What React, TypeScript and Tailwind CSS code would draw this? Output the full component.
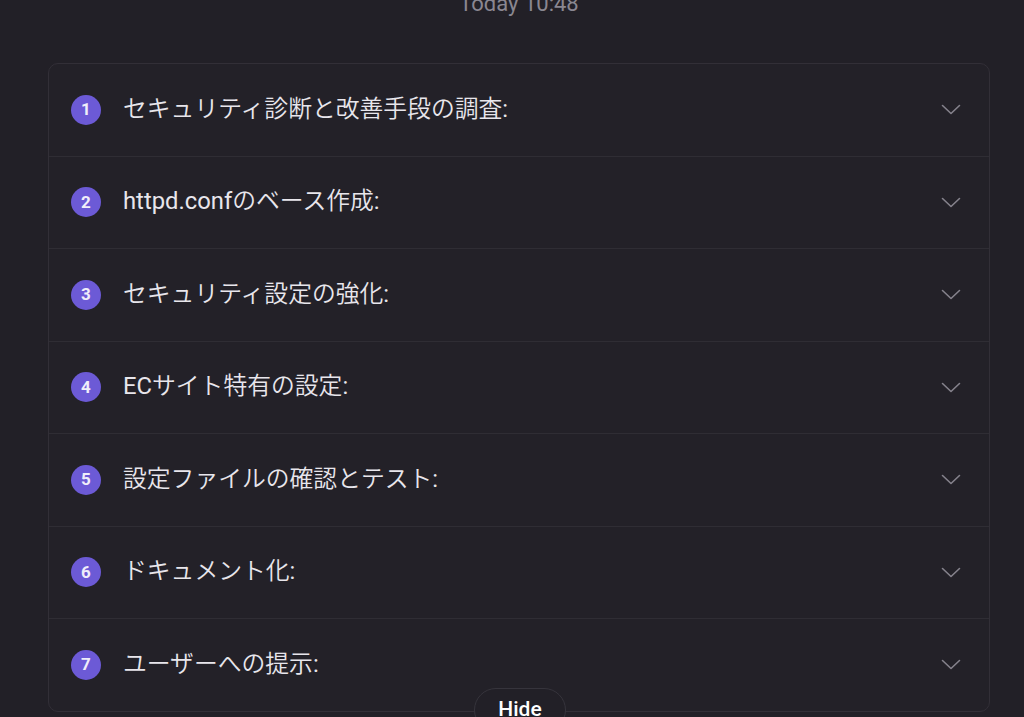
import React from "react";

const items = [
  "セキュリティ診断と改善手段の調査:",
  "httpd.confのベース作成:",
  "セキュリティ設定の強化:",
  "ECサイト特有の設定:",
  "設定ファイルの確認とテスト:",
  "ドキュメント化:",
  "ユーザーへの提示:",
];

function Chevron() {
  return (
    <svg width="20" height="11" viewBox="0 0 20 11" fill="none">
      <path d="M1.5 1.5 L10 9.5 L18.5 1.5" stroke="#85828c" strokeWidth="1.6" strokeLinecap="round" strokeLinejoin="round" />
    </svg>
  );
}

function Label({ text }: { text: string }) {
  const parts = text.split(/([\x00-\x7f]+)/).filter((p) => p.length > 0);
  return (
    <>
      {parts.map((p, i) =>
        /^[\x00-\x7f]+$/.test(p) ? (
          <span key={i} className="font-normal">
            {p}
          </span>
        ) : (
          <span key={i}>{p}</span>
        )
      )}
    </>
  );
}

export default function App() {
  return (
    <div
      className="w-[1024px] h-[717px] overflow-hidden bg-[#222027] text-white"
      style={{ fontFamily: 'Roboto, "Noto Sans CJK JP", sans-serif' }}
    >
      <div className="h-[63px] flex justify-center">
        <div className="ml-[14px] mt-[-10px] text-[22px] leading-[28px] text-[#8a8791]">Today 10:48</div>
      </div>
      <div className="relative ml-[48px] w-[942px]">
        <div className="rounded-[10px] border border-[#322f37] bg-[#232128]">
          {items.map((t, i) => (
            <div
              key={i}
              className={`flex items-center pl-[22px] pr-[28px] ${i > 0 ? "h-[92.5px] border-t border-[#2f2d34]" : "h-[91.5px]"}`}
            >
              <div className="w-[30px] h-[30px] rounded-full bg-[#6c5ad6] flex items-center justify-center text-[17px] font-bold text-[#f0eefa] shrink-0">
                {i + 1}
              </div>
              <div className="ml-[22px] flex-1 text-[23.8px] font-[350] text-[#e8e6ec]">
                <Label text={t} />
              </div>
              <Chevron />
            </div>
          ))}
        </div>
        <div className="absolute left-[426px] top-[625px] w-[92px] h-[44px] rounded-full border border-[#36343c] bg-[#222027] flex justify-center pt-[6px]">
          <span className="text-[21px] font-medium text-white leading-[28px]">Hide</span>
        </div>
      </div>
    </div>
  );
}
